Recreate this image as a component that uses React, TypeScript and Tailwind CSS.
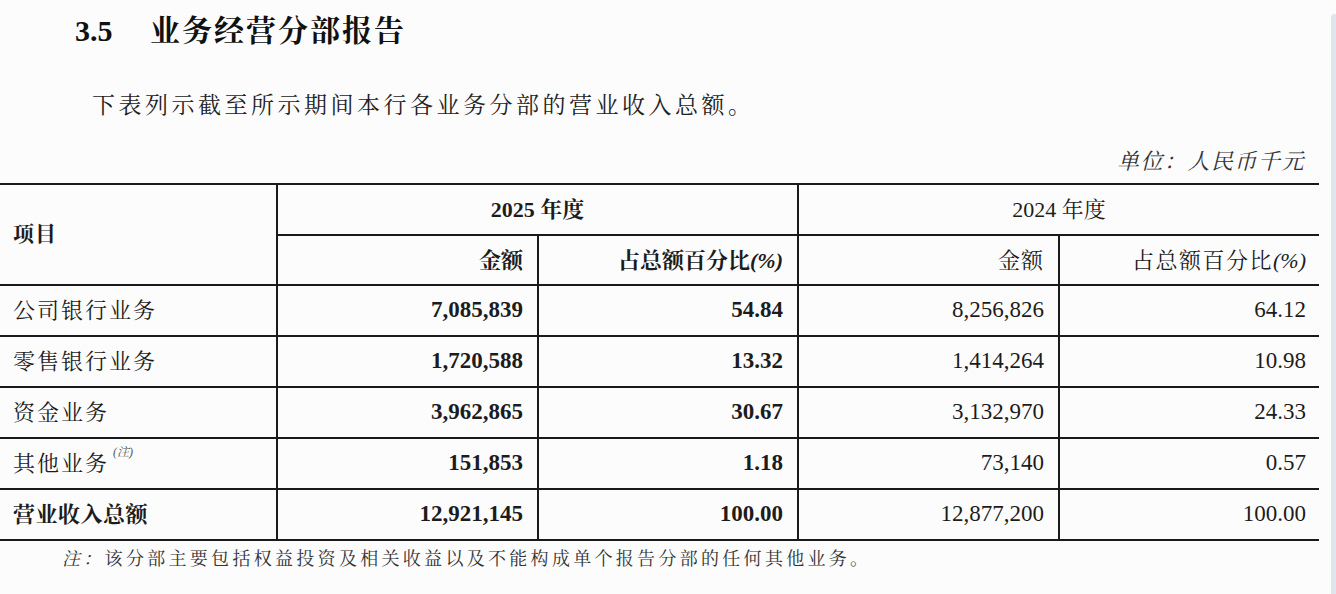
import React from "react";

type Row = {
  name: string;
  note?: boolean;
  a2025: string;
  p2025: string;
  a2024: string;
  p2024: string;
  total?: boolean;
};

const rows: Row[] = [
  { name: "公司银行业务", a2025: "7,085,839", p2025: "54.84", a2024: "8,256,826", p2024: "64.12" },
  { name: "零售银行业务", a2025: "1,720,588", p2025: "13.32", a2024: "1,414,264", p2024: "10.98" },
  { name: "资金业务", a2025: "3,962,865", p2025: "30.67", a2024: "3,132,970", p2024: "24.33" },
  { name: "其他业务", note: true, a2025: "151,853", p2025: "1.18", a2024: "73,140", p2024: "0.57" },
  { name: "营业收入总额", total: true, a2025: "12,921,145", p2025: "100.00", a2024: "12,877,200", p2024: "100.00" },
];

const font = { fontFamily: '"Liberation Serif", "Noto Serif CJK SC", "Noto Sans CJK SC", serif' };

const App: React.FC = (): React.ReactElement => {
  return (
    <div className="flex w-[1336px] h-[594px] bg-[#fcfcfd] text-[#1c1c1c] overflow-hidden" style={font}>
      <div className="flex-1 flex flex-col">
        {/* Heading */}
        <h2 className="flex items-center pt-[13px] pl-[75px] h-[49px] text-[30px] leading-[36px] font-bold text-[#111]">
          <span className="w-[75px]">3.5</span>
          <span className="tracking-[2px]">业务经营分部报告</span>
        </h2>

        <p className="mt-[42px] pl-[92px] text-[23px] leading-[30px] tracking-[3.5px] text-[#222]">
          下表列示截至所示期间本行各业务分部的营业收入总额。
        </p>

        <p className="mt-[26px] pr-[26px] text-right text-[22px] leading-[30px] italic tracking-[1.5px] text-[#333]">
          单位：人民币千元
        </p>

        {/* Table */}
        <table className="mt-[6px] w-[1319px] border-collapse table-fixed text-[22px]">
          <colgroup>
            <col className="w-[277px]" />
            <col className="w-[261px]" />
            <col className="w-[260px]" />
            <col className="w-[261px]" />
            <col className="w-[260px]" />
          </colgroup>
          <thead>
            <tr className="h-[51px]">
              <th rowSpan={2} className="border-y-2 border-[#1a1a1a] pl-[13px] text-left font-bold text-[21px] tracking-[1px]">
                项目
              </th>
              <th colSpan={2} className="border-2 border-[#1a1a1a] text-center font-bold text-[22px]">
                2025 年度
              </th>
              <th colSpan={2} className="border-y-2 border-l-2 border-[#1a1a1a] text-center font-normal text-[22px]">
                2024 年度
              </th>
            </tr>
            <tr className="h-[50px]">
              <th className="border-2 border-[#1a1a1a] pr-[14px] text-right font-bold">金额</th>
              <th className="border-2 border-[#1a1a1a] pr-[14px] text-right font-bold">
                占总额百分比<span className="italic">(%)</span>
              </th>
              <th className="border-2 border-[#1a1a1a] pr-[14px] text-right font-normal tracking-[1px]">金额</th>
              <th className="border-y-2 border-l-2 border-[#1a1a1a] pr-[13px] text-right font-normal tracking-[1.5px]">
                占总额百分比<span className="italic tracking-normal">(%)</span>
              </th>
            </tr>
          </thead>
          <tbody>
            {rows.map((r) => (
              <tr key={r.name} className="h-[51px]">
                <td
                  className={`border-y-2 border-[#1a1a1a] pl-[13px] text-left ${
                    r.total ? "font-bold tracking-[0.5px]" : "tracking-[2px]"
                  }`}
                >
                  {r.name}
                  {r.note && (
                    <sup className="ml-[4px] text-[12px] italic tracking-normal text-[#555] align-[9px]">(注)</sup>
                  )}
                </td>
                <td className="border-2 border-[#1a1a1a] pr-[14px] text-right font-bold text-[23px]">{r.a2025}</td>
                <td className="border-2 border-[#1a1a1a] pr-[14px] text-right font-bold text-[23px]">{r.p2025}</td>
                <td className="border-2 border-[#1a1a1a] pr-[14px] text-right text-[23px]">{r.a2024}</td>
                <td className="border-y-2 border-l-2 border-[#1a1a1a] pr-[13px] text-right text-[23px]">{r.p2024}</td>
              </tr>
            ))}
          </tbody>
        </table>

        <p className="mt-[5px] pl-[62px] text-[18px] leading-[26px] tracking-[3.3px] text-[#333]">
          <span className="italic">注：</span>该分部主要包括权益投资及相关收益以及不能构成单个报告分部的任何其他业务。
        </p>
      </div>
      <div className="w-[5px] mt-[14px] rounded-tl-[3px] bg-[#dfe5ee]" />
    </div>
  );
};

export default App;
